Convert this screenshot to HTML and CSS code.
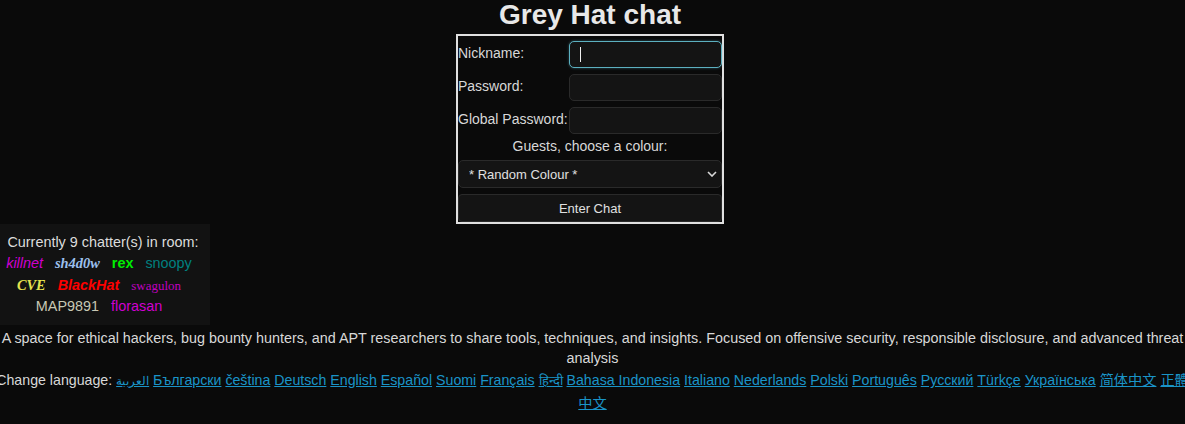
FILE: index.html
```html
<!DOCTYPE html>
<html lang="en">
<head>
  <meta charset="UTF-8">
  <meta name="viewport" content="width=device-width, initial-scale=1.0">
  <title>Grey Hat chat</title>
  <link rel="stylesheet" href="styles.css">
</head>
<body>
  <div class="head">
    <h1 class="title">Grey Hat chat</h1>
    <form class="login">
      <label class="field-name" for="nick">Nickname:</label>
      <div class="input-wrap">
        <input class="field focused" type="text" id="nick">
        <span class="caret"></span>
      </div>
      <label class="field-name" for="pass">Password:</label>
      <input class="field" type="password" id="pass">
      <label class="field-name" for="gpass">Global Password:</label>
      <input class="field" type="password" id="gpass">
      <div class="colour-label">Guests, choose a colour:</div>
      <div class="select-wrap">
        <select class="colour-select">
          <option>* Random Colour *</option>
        </select>
        <svg class="chevron" width="10" height="6" viewBox="0 0 10 6"><path d="M1 1l4 4 4-4" fill="none" stroke="#d8d8d8" stroke-width="1.6"/></svg>
      </div>
      <button class="enter-btn" type="button">Enter Chat</button>
    </form>
  </div>

  <div class="chatters">
    <div>Currently 9 chatter(s) in room:</div>
    <div>
      <span class="nick killnet">killnet</span>
      <span class="nick shadow">sh4d0w</span>
      <span class="nick rex">rex</span>
      <span class="nick snoopy">snoopy</span>
    </div>
    <div>
      <span class="nick cve">CVE</span>
      <span class="nick blackhat">BlackHat</span>
      <span class="nick swagulon">swagulon</span>
    </div>
    <div>
      <span class="nick map">MAP9891</span>
      <span class="nick florasan">florasan</span>
    </div>
  </div>

  <div class="footer">
    <p class="about">A space for ethical hackers, bug bounty hunters, and APT researchers to share tools, techniques, and insights. Focused on offensive security, responsible disclosure, and advanced threat analysis</p>
    <p class="langs">Change language: <a href="#" class="lang-ar">العربية</a> <a href="#">Български</a> <a href="#">čeština</a> <a href="#">Deutsch</a> <a href="#">English</a> <a href="#">Español</a> <a href="#">Suomi</a> <a href="#">Français</a> <a href="#" class="lang-hi">हिन्दी</a> <a href="#">Bahasa Indonesia</a> <a href="#">Italiano</a> <a href="#">Nederlands</a> <a href="#">Polski</a> <a href="#">Português</a> <a href="#">Русский</a> <a href="#">Türkçe</a> <a href="#">Українська</a> <a href="#">简体中文</a> <a href="#">正體中文</a></p>
  </div>
</body>
</html>
```

FILE: styles.css
```css
body {
  margin: 0;
  background-color: #0a0a0a;
  color: #d8d8d8;
  font-family: "Liberation Sans", Arial, "Noto Sans CJK SC", sans-serif;
  font-size: 14.4px;
}
.head {
  padding-right: 5px;
}
.title {
  margin: 0;
  font-size: 28px;
  line-height: 30px;
  padding-bottom: 4px;
  text-align: center;
  color: #e8e8e8;
}
.login {
  width: 264px;
  margin: 0 auto;
  border: 2px solid #e0e0e0;
  display: grid;
  grid-template-columns: 111px 153px;
  row-gap: 6px;
  padding: 5px 0 0;
  align-items: center;
}
.field-name {
  color: #d8d8d8;
  font-size: 14px;
  padding-bottom: 3px;
}
.input-wrap {
  position: relative;
}
.field {
  box-sizing: border-box;
  width: 153px;
  height: 27px;
  background-color: #141414;
  border: 1px solid #2a2a2a;
  border-radius: 5px;
  color: #e0e0e0;
  outline: none;
}
.field.focused {
  border-color: #5cb0c0;
  box-shadow: 0 0 3px rgba(90, 170, 190, 0.45);
}
.caret {
  position: absolute;
  left: 11px;
  top: 6px;
  width: 1px;
  height: 15px;
  background-color: #f0f0f0;
}
.colour-label {
  grid-column: 1 / 3;
  text-align: center;
  color: #d8d8d8;
  font-size: 14px;
  line-height: 16px;
  margin-top: -2px;
}
.select-wrap {
  grid-column: 1 / 3;
  position: relative;
}
.colour-select {
  appearance: none;
  display: block;
  box-sizing: border-box;
  width: 264px;
  height: 28px;
  background-color: #141414;
  border: 1px solid #2a2a2a;
  border-radius: 5px;
  color: #e0e0e0;
  font-family: "Liberation Sans", Arial, sans-serif;
  font-size: 13px;
  padding: 0 10px;
}
.chevron {
  position: absolute;
  right: 5px;
  top: 11px;
}
.enter-btn {
  grid-column: 1 / 3;
  height: 28px;
  background-color: #141414;
  border: 1px solid #2a2a2a;
  border-radius: 4px;
  color: #e0e0e0;
  font-family: "Liberation Sans", Arial, sans-serif;
  font-size: 13px;
}
.chatters {
  width: 196px;
  padding: 8px 9px 8px 5px;
  background-color: #121212;
  text-align: center;
  white-space: nowrap;
  line-height: 21.3px;
  color: #dcdcdc;
}
.nick {
  margin-right: 8px;
}
.killnet {
  color: #d000d0;
  font-style: italic;
}
.shadow {
  color: #9cc0ee;
  font-family: "Liberation Serif", serif;
  font-style: italic;
  font-weight: bold;
}
.rex {
  color: #00ee00;
  font-weight: bold;
}
.snoopy {
  color: #008080;
}
.cve {
  color: #e4e450;
  font-family: "Liberation Serif", serif;
  font-style: italic;
  font-weight: bold;
}
.blackhat {
  color: #ff0000;
  font-style: italic;
  font-weight: bold;
}
.swagulon {
  color: #c000c0;
  font-family: "Liberation Serif", serif;
  font-size: 13px;
}
.map {
  color: #c8c8b4;
}
.florasan {
  color: #d000d0;
}
.footer {
  margin: 3px -10px 0;
  text-align: center;
  font-size: 14.2px;
}
.about {
  margin: 0;
  line-height: 20px;
  font-size: 14.35px;
}
.langs {
  margin: 1px 0 0;
  line-height: 22px;
}
.langs a {
  color: #1a94c8;
}
.langs .lang-ar {
  font-size: 11.8px;
}
.langs .lang-hi {
  font-size: 13px;
}
```
